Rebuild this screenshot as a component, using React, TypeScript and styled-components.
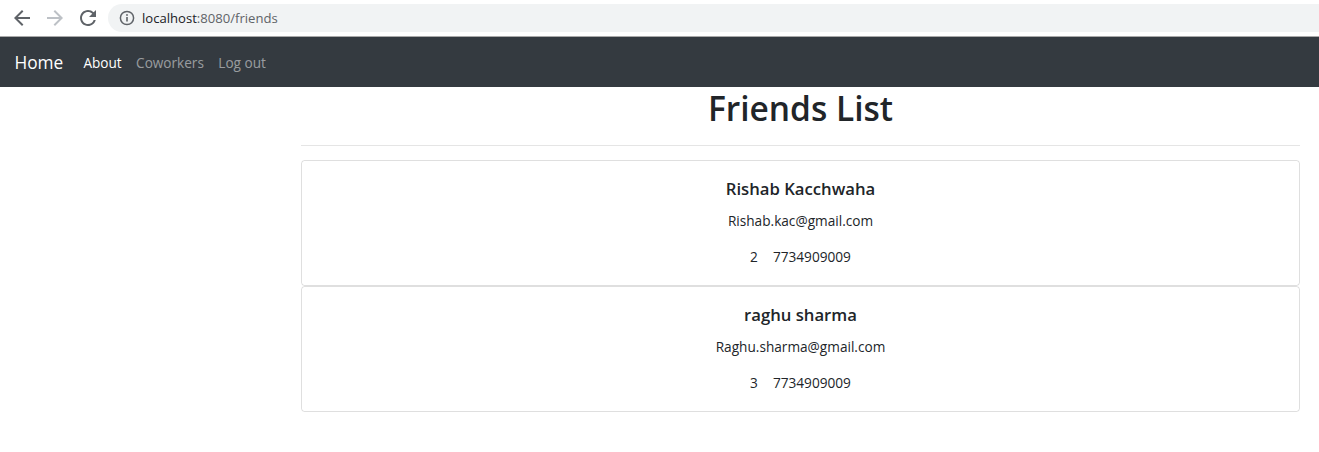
import styled, { createGlobalStyle } from 'styled-components'

const GlobalStyle = createGlobalStyle`
  body {
    margin: 0;
    background: #ffffff;
    font-family: "Segoe UI", "Open Sans", "Liberation Sans", sans-serif;
    color: #212529;
  }
`

const Toolbar = styled.div`
  height: 37px;
  display: flex;
  align-items: center;
  padding: 0 0 1px 10px;
  gap: 9px;
  background: #ffffff;
  border-bottom: 1px solid #a9a9a9;
  box-sizing: border-box;
  overflow: hidden;
`

const ToolButton = styled.span<{ $dim?: boolean }>`
  width: 24px;
  height: 24px;
  display: flex;
  color: ${p => (p.$dim ? '#bdc1c6' : '#5f6368')};
`

const Omnibox = styled.div`
  flex: 1;
  height: 28px;
  margin-left: -1px;
  display: flex;
  align-items: center;
  gap: 7px;
  padding-left: 11px;
  background: #f1f3f4;
  border-radius: 14px 0 0 14px;
  font-size: 13.1px;
  color: #5f6368;
`

const Host = styled.span`
  color: #202124;
`

const Navbar = styled.nav`
  height: 50px;
  display: flex;
  align-items: center;
  padding: 0 14.4px;
  background: #343a40;
  box-sizing: border-box;
`

const Brand = styled.a`
  font-size: 17.3px;
  color: #ffffff;
  margin-right: 13px;
  text-decoration: none;
`

const NavLink = styled.a<{ $active?: boolean }>`
  font-size: 13.6px;
  padding: 0 7.2px;
  color: ${p => (p.$active ? '#ffffff' : 'rgba(255, 255, 255, 0.5)')};
  text-decoration: none;
`

const Main = styled.main`
  padding: 0 19px 0 301px;
  font-size: 13.65px;
  line-height: 21.6px;
`

const Title = styled.h1`
  margin: 0;
  font-size: 33.5px;
  font-weight: 600;
  line-height: 43.2px;
  text-align: center;
`

const Rule = styled.hr`
  margin: 14.4px 0;
  border: 0;
  border-top: 1px solid rgba(0, 0, 0, 0.1);
`

const Card = styled.div`
  border: 1px solid rgba(0, 0, 0, 0.125);
  border-radius: 3.6px;
  padding: 17px;
  text-align: center;
`

const CardTitle = styled.h5`
  margin: 0 0 10.8px;
  font-size: 16.7px;
  font-weight: 600;
  line-height: 21.6px;
`

const CardText = styled.p`
  margin: 0 0 14.4px;
  &:last-child {
    margin-bottom: 0;
  }
`

const Id = styled.span`
  margin-right: 15px;
`

const friends = [
  { id: 2, name: 'Rishab Kacchwaha', email: 'Rishab.kac@gmail.com', phone: '7734909009' },
  { id: 3, name: 'raghu sharma', email: 'Raghu.sharma@gmail.com', phone: '7734909009' },
]

export default function App() {
  return (
    <>
      <GlobalStyle />
      <Toolbar>
        <ToolButton>
          <svg width="24" height="24" viewBox="0 0 24 24" fill="currentColor">
            <path d="M20 11H7.83l5.59-5.59L12 4l-8 8 8 8 1.41-1.41L7.83 13H20v-2z" />
          </svg>
        </ToolButton>
        <ToolButton $dim>
          <svg width="24" height="24" viewBox="0 0 24 24" fill="currentColor">
            <path d="M12 4l-1.41 1.41L16.17 11H4v2h12.17l-5.58 5.59L12 20l8-8z" />
          </svg>
        </ToolButton>
        <ToolButton>
          <svg width="24" height="24" viewBox="0 0 24 24" fill="currentColor">
            <path d="M17.65 6.35A7.958 7.958 0 0012 4c-4.42 0-7.99 3.58-7.99 8s3.57 8 7.99 8c3.73 0 6.84-2.55 7.73-6h-2.08A5.99 5.99 0 0112 18c-3.31 0-6-2.69-6-6s2.69-6 6-6c1.66 0 3.14.69 4.22 1.78L13 11h7V4l-2.35 2.35z" />
          </svg>
        </ToolButton>
        <Omnibox>
          <svg width="16" height="16" viewBox="0 0 16 16" fill="none" stroke="#5f6368">
            <circle cx="8" cy="8" r="6.6" strokeWidth="1.5" />
            <path d="M8 7v4.5" strokeWidth="1.6" />
            <circle cx="8" cy="5" r="0.9" fill="#5f6368" stroke="none" />
          </svg>
          <span>
            <Host>localhost</Host>:8080/friends
          </span>
        </Omnibox>
      </Toolbar>
      <Navbar>
        <Brand href="#">Home</Brand>
        <NavLink $active href="#">About</NavLink>
        <NavLink href="#">Coworkers</NavLink>
        <NavLink href="#">Log out</NavLink>
      </Navbar>
      <Main>
        <Title>Friends List</Title>
        <Rule />
        {friends.map(f => (
          <Card key={f.id}>
            <CardTitle>{f.name}</CardTitle>
            <CardText>{f.email}</CardText>
            <CardText>
              <Id>{f.id}</Id>
              {f.phone}
            </CardText>
          </Card>
        ))}
      </Main>
    </>
  )
}
